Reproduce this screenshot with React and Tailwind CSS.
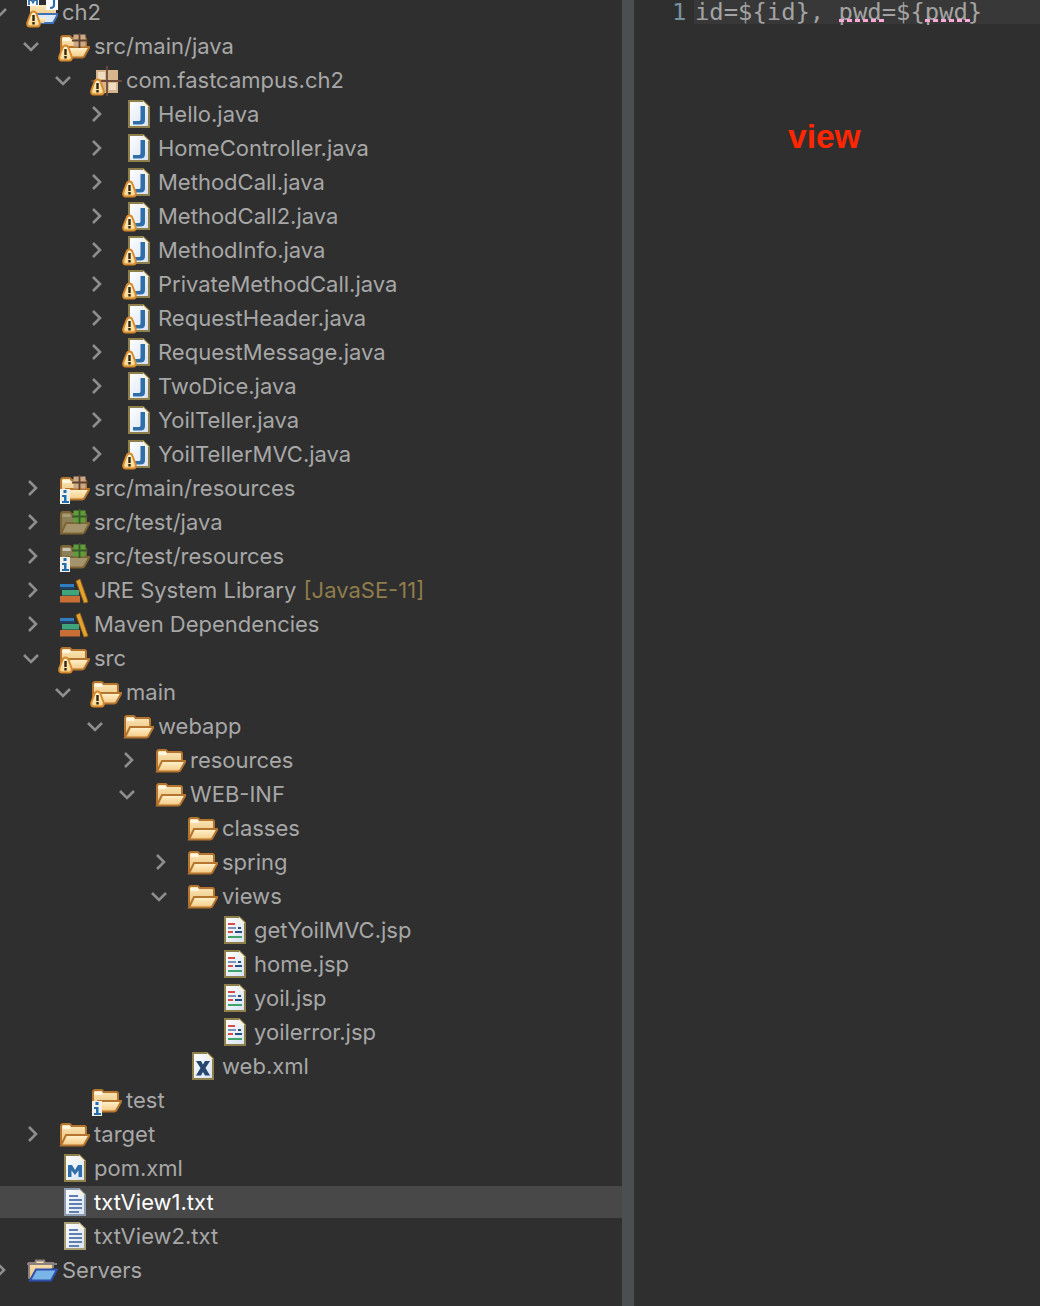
const Chevron = ({ open }) =>
  open ? (
    <svg width="18" height="18" viewBox="0 0 18 18" className="-ml-[10px] shrink-0" fill="none" stroke="#8e8e8e" strokeWidth="2.6">
      <path d="M2 6l7 7 7-7" />
    </svg>
  ) : (
    <svg width="18" height="18" viewBox="0 0 18 18" className="-ml-[8px] shrink-0" fill="none" stroke="#8e8e8e" strokeWidth="2.6">
      <path d="M5 2l7 7-7 7" />
    </svg>
  );

// shared gradients for the tree icons
const Defs = () => (
  <svg className="absolute size-0">
    <defs>
      <linearGradient id="front" x1="0" y1="0" x2="0" y2="1">
        <stop offset="0" stopColor="#fff3cf" />
        <stop offset="1" stopColor="#f4c981" />
      </linearGradient>
      <linearGradient id="back" x1="0" y1="0" x2="0" y2="1">
        <stop offset="0" stopColor="#fbe7b8" />
        <stop offset="1" stopColor="#e9bf78" />
      </linearGradient>
      <linearGradient id="sheet" x1="0" y1="0" x2="1" y2="1">
        <stop offset="0" stopColor="#ffffff" />
        <stop offset="1" stopColor="#d6e2f2" />
      </linearGradient>
      <linearGradient id="warn" x1="0" y1="0" x2="0" y2="1">
        <stop offset="0" stopColor="#fff8dc" />
        <stop offset="1" stopColor="#f6d58c" />
      </linearGradient>
    </defs>
  </svg>
);

const Warn = () => (
  <g>
    <path d="M7.500 15.500c1.700 0 2.500 1 3 2.500l3 8c.8 2.500 0 4.500-2.500 4.500H4c-2.500 0-3.300-2-2.500-4.500l3-8c.5-1.500 1.300-2.500 3-2.500z" fill="url(#warn)" stroke="#d98a2b" strokeWidth="2" />
    <path d="M6.300 19h2.400v6H6.300zM6.300 26h2.400v2.500H6.300z" fill="#33240e" />
  </g>
);

const Info = () => (
  <g>
    <rect x="2" y="17" width="10" height="15" fill="#f3efe6" />
    <path d="M5.500 18h3v3h-3zM4 23h4.500v6H11v2H4v-2h2v-4H4z" fill="#1f6fb0" />
  </g>
);

const Folder = ({ back = "url(#back)", front = "url(#front)", line = "#b5752e", tab = "#fff6e2" }) => (
  <g>
    <path d="M3 26V8.500C3 7 3.800 6 5 6h6.500c1 0 1.500.6 1.800 2H26c1.300 0 2 .8 2 2v7" fill={back} stroke={line} strokeWidth="2" />
    <path d="M4.500 8h8v3h-8z" fill={tab} />
    <path d="M3 27.500l5-10.500h23.500L26.500 26c-.5 1-1 1.500-2.500 1.500z" fill={front} stroke={line} strokeWidth="2" />
  </g>
);

const Grid = ({ fill = "#5e4230", cell = "#cda885" }) => (
  <g>
    <rect x="15.500" y="4.500" width="12" height="12" fill={cell} />
    <path d="M21.500 3v15M14 10.500h15.500" stroke={fill} strokeWidth="1.800" />
  </g>
);

const Sheet = ({ line = "#8f7f4a", children }) => (
  <g>
    <path d="M7 3h14l6 6v20H7z" fill="url(#sheet)" stroke={line} strokeWidth="2" />
    <path d="M21 3v6h6z" fill="#f7f3df" />
    {children}
  </g>
);

const olive = { back: "#8b7f59", front: "#a3946b", line: "#7d6434" };

const ico = {
  java: (w) => (
    <>
      <Sheet>
        <path d="M23 8v14c0 3-1.500 4.500-4.500 4.500H11V23h5.500c1.500 0 2-.5 2-2V8z" fill="#2f6ea8" />
      </Sheet>
      {w && <Warn />}
    </>
  ),
  folder: (w) => (
    <>
      <Folder />
      {w && <Warn />}
    </>
  ),
  srcMain: () => (
    <>
      <Folder />
      <Grid />
      <Warn />
    </>
  ),
  srcRes: () => (
    <>
      <Folder />
      <Grid />
      <Info />
    </>
  ),
  testJava: () => (
    <>
      <Folder {...olive} tab="#a89a72" />
      <Grid fill="#39592a" cell="#5f9c3a" />
    </>
  ),
  testRes: () => (
    <>
      <Folder {...olive} tab="#c9c3b4" />
      <Grid fill="#39592a" cell="#5f9c3a" />
      <Info />
    </>
  ),
  infoFolder: () => (
    <>
      <Folder />
      <Info />
    </>
  ),
  pkg: () => (
    <>
      <rect x="6" y="6" width="22" height="23" fill="#d8b68d" />
      <rect x="8" y="8" width="7" height="7" fill="#f0dcc0" />
      <rect x="19" y="19" width="7" height="7" fill="#f0dcc0" />
      <path d="M17 2v30M1 17h31" stroke="#6b4a3a" strokeWidth="1.800" />
      <Warn />
    </>
  ),
  lib: () => (
    <>
      <rect x="2" y="10" width="14" height="3" fill="#2f7fc0" />
      <rect x="2" y="13" width="15" height="2.500" fill="#22405f" />
      <rect x="4" y="16" width="17" height="5.500" fill="#3fa37c" />
      <rect x="2" y="22" width="20" height="6.500" fill="#c96f35" />
      <path d="M18 7l4-2 8 23-4 1z" fill="#e4a32b" stroke="#9a611e" strokeWidth=".8" />
    </>
  ),
  jsp: () => (
    <Sheet>
      <path d="M10 9h7v2h-7z" fill="#dd4a4a" />
      <path d="M10 13h8v2h-8z" fill="#7d93b8" />
      <path d="M20 13h3v2h-3z" fill="#274f80" />
      <path d="M10 17h5v2h-5z" fill="#dd4a4a" />
      <path d="M17 17h7v2h-7z" fill="#274f80" />
      <path d="M10 22h14v2H10z" fill="#3fa36a" />
    </Sheet>
  ),
  xml: () => (
    <Sheet>
      <path d="M10 11h5l2 3.500L19 11h5l-4.500 7 4.500 7.500h-5l-2-3.500-2 3.500h-5l4.500-7.500z" fill="#27476f" />
    </Sheet>
  ),
  pom: () => (
    <Sheet>
      <path d="M10 13h4l3 5 3-5h4v12h-3.500v-6.500L17 23l-3.500-4.500V25H10z" fill="#2f6ea8" />
    </Sheet>
  ),
  txt: () => (
    <Sheet line="#8d9bb0">
      <path d="M11 9h9v2h-9zM11 13h13v2H11zM11 17h13v2H11zM11 21h13v2H11zM11 25h10v2H11z" fill="#5f7fae" />
    </Sheet>
  ),
  txtOther: () => (
    <Sheet line="#a89f76">
      <path d="M11 9h9v2h-9zM11 13h13v2H11zM11 17h13v2H11zM11 21h13v2H11zM11 25h10v2H11z" fill="#5f7fae" />
    </Sheet>
  ),
  project: () => (
    <>
      <path d="M4 24V9h26v9z" fill="url(#back)" />
      <path d="M3 27l6-9h23l-5 9z" fill="#dce9f8" stroke="#3f6fb5" strokeWidth="2" />
      <path d="M3 22h18l-3 5H3z" fill="url(#front)" />
      <rect x="1" y="0" width="12" height="10" fill="#fff" />
      <rect x="20" y="0" width="12" height="14" fill="#fff" />
      <path d="M3 9V4h2.500L7 6.500 8.500 4H11v5" fill="none" stroke="#2f6ea8" strokeWidth="1.800" />
      <path d="M28 3v6c0 2-1 3-4 3" fill="none" stroke="#2f6ea8" strokeWidth="2.200" />
      <Warn />
    </>
  ),
  servers: () => (
    <>
      <path d="M3 25V9h6l1-2.500h8L19 9h8v5" fill="url(#back)" stroke="#8f8080" strokeWidth="2" />
      <path d="M1 10h30" stroke="#8f8080" strokeWidth="2" />
      <path d="M4 26.500l6-11h21l-6 11z" fill="#7ab5e8" stroke="#2f4fb0" strokeWidth="2" />
    </>
  ),
};

const rows = [
  [0, "open", "project", "ch2"],
  [1, "open", "srcMain", "src/main/java"],
  [2, "open", "pkg", "com.fastcampus.ch2"],
  [3, "closed", "java", "Hello.java"],
  [3, "closed", "java", "HomeController.java"],
  [3, "closed", "javaW", "MethodCall.java"],
  [3, "closed", "javaW", "MethodCall2.java"],
  [3, "closed", "javaW", "MethodInfo.java"],
  [3, "closed", "javaW", "PrivateMethodCall.java"],
  [3, "closed", "javaW", "RequestHeader.java"],
  [3, "closed", "javaW", "RequestMessage.java"],
  [3, "closed", "java", "TwoDice.java"],
  [3, "closed", "java", "YoilTeller.java"],
  [3, "closed", "javaW", "YoilTellerMVC.java"],
  [1, "closed", "srcRes", "src/main/resources"],
  [1, "closed", "testJava", "src/test/java"],
  [1, "closed", "testRes", "src/test/resources"],
  [1, "closed", "lib", "JRE System Library", "[JavaSE-11]"],
  [1, "closed", "lib", "Maven Dependencies"],
  [1, "open", "folderW", "src"],
  [2, "open", "folderW", "main"],
  [3, "open", "folder", "webapp"],
  [4, "closed", "folder", "resources"],
  [4, "open", "folder", "WEB-INF"],
  [5, null, "folder", "classes"],
  [5, "closed", "folder", "spring"],
  [5, "open", "folder", "views"],
  [6, null, "jsp", "getYoilMVC.jsp"],
  [6, null, "jsp", "home.jsp"],
  [6, null, "jsp", "yoil.jsp"],
  [6, null, "jsp", "yoilerror.jsp"],
  [5, null, "xml", "web.xml"],
  [2, null, "infoFolder", "test"],
  [1, "closed", "folder", "target"],
  [1, null, "pom", "pom.xml"],
  [1, null, "txt", "txtView1.txt", null, true],
  [1, null, "txtOther", "txtView2.txt"],
  [0, "closed", "servers", "Servers"],
];

function Icon({ name }) {
  const warn = name.endsWith("W");
  const draw = ico[warn ? name.slice(0, -1) : name];
  return (
    <svg width="32" height="32" viewBox="0 0 32 32" className="shrink-0">
      {draw(warn)}
    </svg>
  );
}

function Row({ depth, chevron, icon, label, extra, selected }) {
  return (
    <div className={`relative flex h-[34px] shrink-0 items-center ${selected ? "text-white" : "text-[#a7a7a7]"}`} style={{ paddingLeft: depth * 32 }}>
      {selected && <div className="absolute inset-x-0 top-px bottom-px bg-[#484848]" />}
      <div className="relative flex w-[26px] shrink-0 items-center">{chevron && <Chevron open={chevron === "open"} />}</div>
      <div className="relative flex items-center gap-1">
        <Icon name={icon} />
        <span className="whitespace-nowrap">
          {label}
          {extra && <span className="ml-px text-[#8f7d4c]"> {extra}</span>}
        </span>
      </div>
    </div>
  );
}

const Spell = ({ children }) => (
  <span className="relative">
    {children}
    <span className="absolute top-[21px] -right-[2px] left-0 h-[3px] bg-[repeating-linear-gradient(90deg,#ffa8d8_0_5px,transparent_5px_8px)]" />
  </span>
);

export default function App() {
  return (
    <div className="flex h-[1306px] w-[1040px] overflow-hidden bg-[#2f2f2f]">
      <Defs />
      <div className="w-[622px] shrink-0 overflow-hidden font-['Inter',sans-serif] text-[22px]">
        <div className="-mt-[5px] flex flex-col">
          {rows.map((r, i) => (
            <Row key={i} depth={r[0]} chevron={r[1]} icon={r[2]} label={r[3]} extra={r[4]} selected={r[5]} />
          ))}
        </div>
      </div>
      <div className="w-3 shrink-0 bg-[#4a4f52]" />
      <div className="min-w-0 flex-1">
        <div className="flex h-6 font-['DejaVu_Sans_Mono',monospace] text-[23.85px] leading-6">
          <span className="w-[60px] shrink-0 pl-[38px] text-[#76929f]">1</span>
          <div className="flex-1 bg-[#383838] pl-px whitespace-pre text-[#a3a3a3]">
            id=${"{"}id{"}"}, <Spell>pwd</Spell>=${"{"}
            <Spell>pwd</Spell>
            {"}"}
          </div>
        </div>
        <div className="mt-[92px] pl-[154px] font-['Liberation_Sans',sans-serif] text-[33.5px] leading-[42px] font-bold text-[#ff2600]">view</div>
      </div>
    </div>
  );
}
